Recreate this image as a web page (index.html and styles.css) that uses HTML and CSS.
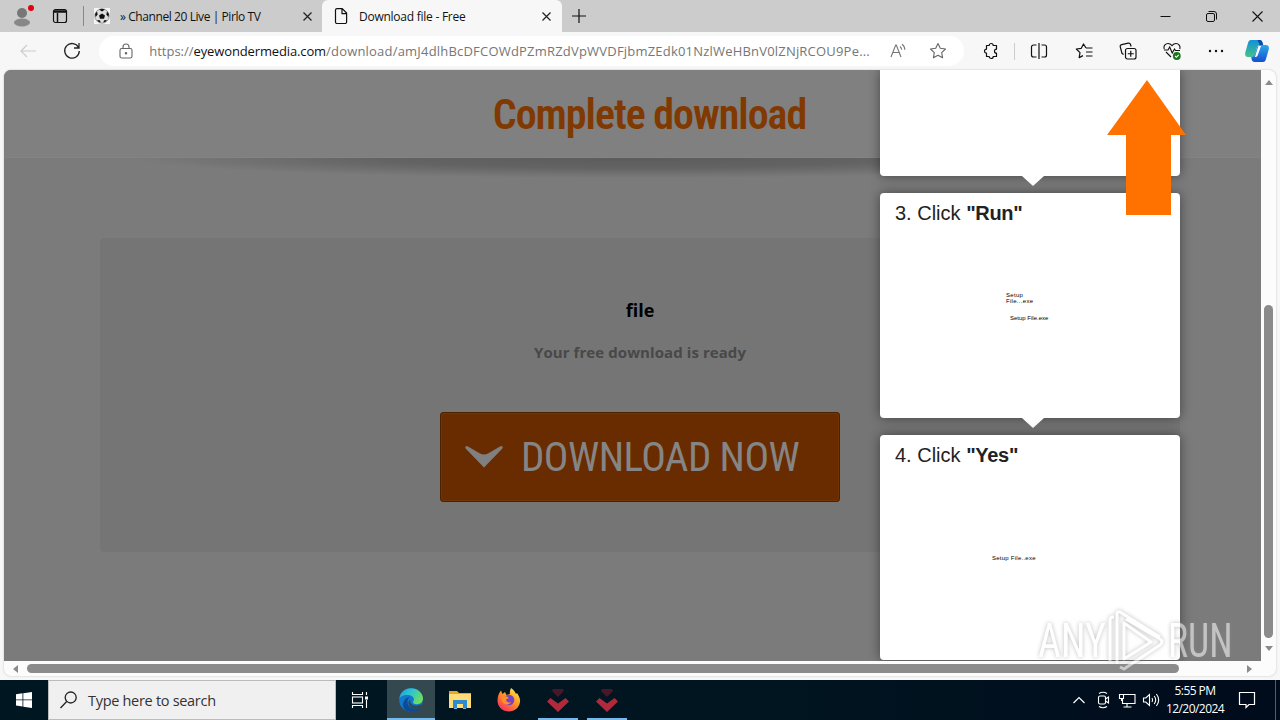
FILE: index.html
```html
<!DOCTYPE html>
<html lang="en">
<head>
    <meta charset="utf-8">
    <title>Download file - Free</title>
    <link rel="stylesheet" href="styles.css">
</head>
<body>
    <div class="tabstrip">
        <div class="profile">
            <svg width="20" height="24" viewBox="0 0 20 24"><circle cx="10" cy="9" r="5" fill="#777"/><ellipse cx="10" cy="18.5" rx="8" ry="4" fill="#888"/><circle cx="19" cy="4" r="3" fill="#e3000f"/></svg>
        </div>
        <div class="workspaces">
            <svg width="16" height="16" viewBox="0 0 16 16" fill="none" stroke="#111" stroke-width="1.200"><rect x="1.500" y="1.500" width="13" height="13" rx="2"/><path d="M2 3h12M2 4h12M5.500 5v9" stroke-width="1.500"/></svg>
        </div>
        <div class="tab-separator"></div>
        <div class="tab">
            <svg class="favicon" width="16" height="16" viewBox="0 0 16 16"><rect width="16" height="16" fill="#f4f4f4"/><circle cx="8" cy="8" r="7.200" fill="#ddd" stroke="#777" stroke-width=".7"/><path d="M8 5.500l3 2-1 3.200H6L5 7.500zM5 1.500l3-.8 3 .9-3 2zM1 6l2-2.500.7 3L1.600 9zM15 6l-2-2.500-.7 3L14.400 9zM3 12l2.800.2 1 2.400-2-.6zM13 12l-2.800.2-1 2.400 2-.6z" fill="#111"/></svg>
            <span class="tab-title first">» Channel 20 Live | Pirlo TV</span>
            <svg class="close" width="9" height="9" viewBox="0 0 9 9"><path d="M.5.5l8 8M8.500.5l-8 8" stroke="#222" stroke-width="1.200"/></svg>
        </div>
        <div class="tab active">
            <svg class="favicon" width="16" height="16" viewBox="0 0 16 16" fill="none" stroke="#111" stroke-width="1.200"><path d="M3.500.6h4.700L12.600 5v9a1.500 1.500 0 0 1-1.500 1.500H3A1.500 1.500 0 0 1 1.500 14V2A1.500 1.500 0 0 1 3 .6zM8 1v4.600h4.400"/></svg>
            <span class="tab-title second">Download file - Free</span>
            <svg class="close" width="9" height="9" viewBox="0 0 9 9"><path d="M.5.5l8 8M8.500.5l-8 8" stroke="#222" stroke-width="1.200"/></svg>
        </div>
        <div class="newtab">
            <svg width="14" height="14" viewBox="0 0 14 14"><path d="M7 0v14M0 7h14" stroke="#111" stroke-width="1.200"/></svg>
        </div>
        <div class="window-buttons">
            <div><svg width="11" height="11" viewBox="0 0 11 11"><path d="M.5 5.500h10" stroke="#111"/></svg></div>
            <div><svg width="11" height="11" viewBox="0 0 11 11" fill="none" stroke="#111"><rect x=".5" y="2.500" width="8" height="8" rx="1.500"/><path d="M2.500.5H8a2.500 2.500 0 0 1 2.500 2.500v5.500"/></svg></div>
            <div><svg width="11" height="11" viewBox="0 0 11 11"><path d="M.5.5l10 10M10.500.5l-10 10" stroke="#111" stroke-width="1.100"/></svg></div>
        </div>
    </div>

    <div class="toolbar">
        <div class="tool back"><svg width="16" height="14" viewBox="0 0 16 14" fill="none" stroke="#ccc" stroke-width="1.200"><path d="M16 7H1M7 1L1 7l6 6"/></svg></div>
        <div class="tool"><svg width="18" height="18" viewBox="0 0 18 18" fill="none" stroke="#222" stroke-width="1.300"><path d="M15.500 5.500A7.300 7.300 0 1 0 16.300 9M16 1v5h-5"/></svg></div>
        <div class="address">
            <svg class="lock" width="14" height="16" viewBox="0 0 14 16" fill="none" stroke="#666" stroke-width="1.100"><rect x="1" y="5.500" width="12" height="9.500" rx="1.800"/><path d="M4 5.500V4a3 3 0 0 1 6 0v1.500"/><circle cx="7" cy="10.200" r=".7" fill="#666"/></svg>
            <span class="url">https://<b>eyewondermedia.com</b><span class="path">/download/amJ4dlhBcDFCOWdPZmRZdVpWVDFjbmZEdk01NzlWeHBnV0lZNjRCOU9Pe...</span></span>
            <svg class="read" width="18" height="16" viewBox="0 0 18 16" fill="none" stroke="#777" stroke-width="1.100"><path d="M1 14L5.700 2h.6L11 14M2.800 9.500h6.400M10 3.500c1 .8 1.600 1.800 1.600 3.200M12 1.300c1.800 1.300 2.800 3.200 2.800 5.500"/></svg>
            <svg class="star" width="18" height="18" viewBox="0 0 18 18" fill="none" stroke="#666" stroke-width="1.100"><path d="M9 1.500l2.300 4.800 5.200.7-3.800 3.600.9 5.200L9 13.300l-4.600 2.500.9-5.200L1.500 7l5.200-.7z" stroke-linejoin="round"/></svg>
        </div>
        <div class="tool puzzle"><svg width="18" height="18" viewBox="0 0 18 18" fill="none" stroke="#111" stroke-width="1.200"><path d="M4.500 3.500h2.700a2 2 0 0 1 4 0h3.300v3.700a2 2 0 0 0 0 4v3.300h-3.300a2 2 0 0 1-4 0H4.500v-3.300a2 2 0 0 1 0-4z" stroke-linejoin="round"/></svg></div>
        <div class="tool-separator"></div>
        <div class="tool"><svg width="18" height="18" viewBox="0 0 18 18" fill="none" stroke="#111" stroke-width="1.200"><path d="M6.500 3H3.500a2 2 0 0 0-2 2v8a2 2 0 0 0 2 2h3M11.500 3h3a2 2 0 0 1 2 2v8a2 2 0 0 1-2 2h-3M9 1v16"/></svg></div>
        <div class="tool"><svg width="18" height="18" viewBox="0 0 18 18" fill="none" stroke="#111" stroke-width="1.200"><path d="M11 6L8.500 2 6.300 6.300l-5 .7L5 10.600l-.8 5 3.800-2M11 6h6.500M11 10h6.500M11 14h6.500" stroke-linejoin="round"/></svg></div>
        <div class="tool"><svg width="18" height="18" viewBox="0 0 18 18" fill="none" stroke="#111" stroke-width="1.200"><rect x="6.500" y="6.500" width="10.500" height="10.500" rx="2"/><path d="M11.750 8.700v6M8.750 11.750h6M4.500 12.500L3 11.300 1.300 5a2 2 0 0 1 1.400-2.400l6.500-1.500a2 2 0 0 1 2.300 1.400l.6 2"/></svg></div>
        <div class="tool"><svg width="18" height="18" viewBox="0 0 18 18" fill="none" stroke="#111" stroke-width="1.100"><path d="M1.300 7C0 3.500 3 1.500 5 1.500c2 0 3 1 4 2.200 1-1.200 2-2.200 4-2.200 2.500 0 4.800 2.300 3.700 5.500M3 10l5 5M1 8h4l1.700-3 2.500 6L11.500 7l1 1.500H17"/><circle cx="13.800" cy="14" r="3.900" fill="#18751c" stroke="none"/><path d="M12 14l1.400 1.300 2.300-2.500" stroke="#fff"/></svg></div>
        <div class="tool"><svg width="16" height="4" viewBox="0 0 16 4" fill="#111"><circle cx="2" cy="2" r="1.200"/><circle cx="8" cy="2" r="1.200"/><circle cx="14" cy="2" r="1.200"/></svg></div>
        <div class="tool copilot">
            <svg width="24" height="24" viewBox="0 0 24 24">
                <defs>
                    <linearGradient id="cpa" x1="0" y1="0" x2="0" y2="1"><stop offset="0" stop-color="#138fd8"/><stop offset="1" stop-color="#42c489"/></linearGradient>
                    <linearGradient id="cpb" x1="0" y1="0" x2="0" y2="1"><stop offset="0" stop-color="#2aa9ec"/><stop offset="1" stop-color="#154fd0"/></linearGradient>
                </defs>
                <path d="M6 1h8.500c1.500 0 2.300 1 2.800 2.500l.8 2.500H15c-1.600 0-2.400.7-3 2.500l-2 6.500c-.6 2-1.500 3-3.500 3H3C.5 18-.3 16 .3 13.500L3 4c.5-2 1.400-3 3-3z" fill="url(#cpa)"/>
                <path d="M18 23H9.500C8 23 7 22 6.700 20.500L6.200 18c2-.2 3.200-1 3.800-3l2-6.500c.6-1.800 1.400-2.500 3-2.500h6c2.500 0 3.300 2 2.700 4.500L21 20c-.5 2-1.400 3-3 3z" fill="url(#cpb)"/>
                <path d="M15 1c1.500 0 2 1 2.500 2.500l.7 2.500h-3.500L12.500 1z" fill="#0d49ad"/>
                <path d="M13.500 7H16l-3 8.500c-.7 1.900-1.200 2.500-3.500 2.500.7-.7 1-1.500 1.300-3z" fill="#fff"/>
            </svg>
        </div>
    </div>

    <div class="browser-page">
        <div class="viewport">
            <header class="page-header"><h1>Complete download</h1></header>
            <div class="header-shadow"></div>
            <main class="download-box">
                <h2>file</h2>
                <p class="ready">Your free download is ready</p>
                <div class="download-button">
                    <svg width="38" height="22" viewBox="0 0 38 22"><path d="M.3 1.500C0 .3 1 0 3 .5L15 7.500q4 2 8 0L35 .5c2-.6 3-.2 2.700 1-.2 1-1 1.700-2 2.700L19 21.500 2.300 4.200C1.300 3.200.5 2.500.3 1.500z" fill="#808080"/></svg>
                    <span>DOWNLOAD NOW</span>
                </div>
            </main>

            <div class="steps">
                <section class="step previous"></section>
                <section class="step">
                    <h3>3. Click <b>"Run"</b></h3>
                    <div class="file-name wrapped">Setup<br>File...exe</div>
                    <div class="file-name source">Setup File.exe</div>
                </section>
                <section class="step last">
                    <h3>4. Click <b>"Yes"</b></h3>
                    <div class="file-name confirm">Setup File..exe</div>
                </section>
            </div>
            <svg class="arrow" width="80" height="136" viewBox="0 0 80 136"><path d="M40 0L79 55H64v80H19V55H0z" fill="#ff7200"/></svg>
        </div>
        <div class="scroll-y">
            <i class="up"></i>
            <div class="thumb-y"></div>
            <i class="down"></i>
        </div>
        <div class="scroll-x">
            <i class="left"></i>
            <div class="thumb-x"></div>
            <i class="right"></i>
        </div>
    </div>

    <div class="watermark">
        <span class="any">ANY</span>
        <svg width="60" height="64" viewBox="0 0 60 64" fill="none" stroke="#fff" stroke-width="3"><path d="M4 52V11q0-3 3-3h1M11 55V5q0-3 3-2l40 25M18 14v36l27-17zM14 58l4 2 36-24q4-3 0-6L20 10" stroke-linejoin="round"/></svg>
        <span class="run">RUN</span>
    </div>

    <div class="taskbar">
        <div class="start"><svg width="16" height="16" viewBox="0 0 16 16" fill="#fff"><path d="M0 2.200l6.500-.9v6.200H0zM7.300 1.200L16 0v7.500H7.300zM0 8.300h6.500v6.200L0 13.600zM7.300 8.300H16V16l-8.700-1.300z"/></svg></div>
        <div class="search">
            <svg width="18" height="18" viewBox="0 0 18 18" fill="none" stroke="#222" stroke-width="1.300"><circle cx="10.700" cy="6.500" r="5.500"/><path d="M6.700 10.500L.5 17"/></svg>
            <span>Type here to search</span>
        </div>
        <div class="app taskview"><svg width="18" height="16" viewBox="0 0 18 16" fill="none" stroke="#fff" stroke-width="1.100"><path d="M1.500 0v2.500h10V0M1.500 16v-2.500h10V16M15.500 0v3M15.500 8v8"/><rect x="1.500" y="5" width="10" height="6"/><path d="M14 4.500h3v3h-3z" fill="#fff" stroke="none"/></svg></div>
        <div class="app current">
            <svg width="24" height="24" viewBox="0 0 24 24">
                <defs><linearGradient id="edge" x1="0" y1="0" x2="1" y2=".5"><stop offset="0" stop-color="#2299d4"/><stop offset=".5" stop-color="#2fc4d1"/><stop offset="1" stop-color="#6bdd61"/></linearGradient></defs>
                <circle cx="12" cy="12" r="11.800" fill="#1377ce"/>
                <path d="M.3 11C1 4.500 5.500.2 12 .2c7 0 12 5 12 10.300 0 3.500-2.500 5.700-6 5.700-2.500 0-4-.8-4-2 0-1 1-1.300 1-3C15 8.500 11.500 7 8 7 4 7 1 9 .3 11z" fill="url(#edge)"/>
                <path d="M8.500 13c-.5 5 4 8.500 9 7.500 2-.4 3.500-1 4.500-1.600-2 3.200-5.500 5-10 5C5 23.500 3 18 4.500 14c1-3 4-5 6.500-5-1.500.8-2.300 2-2.500 4z" fill="#0c4c96"/>
                <path d="M11.500 11.500c-1.500 4.500 3.500 7.500 9 5.500 1.500-.5 2.500-.7 2.300 0-.3.800-1 2-2 2.800-5 3-11-.2-11.300-4.800 0-1.500.8-2.700 2-3.500z" fill="#34484d"/>
            </svg>
        </div>
        <div class="app"><svg width="22" height="20" viewBox="0 0 22 20"><path d="M0 1h8l2 2h12v15H0z" fill="#e8a52b"/><path d="M0 4h22v14H0z" fill="#ffdc76"/><path d="M4 10h14v8h-4v-4H8v4H4z" fill="#2d8ccf"/><path d="M5 18.500h3M14 18.500h3" stroke="#79bae8"/></svg></div>
        <div class="app">
            <svg width="24" height="24" viewBox="0 0 24 24">
                <defs><linearGradient id="fox" x1=".9" y1="0" x2=".2" y2="1"><stop offset="0" stop-color="#fff44f"/><stop offset=".45" stop-color="#ff9924"/><stop offset="1" stop-color="#f52a61"/></linearGradient></defs>
                <path d="M14 0c3 2 4 4 5 6l1-1c2 3 3.500 6 3 9-1 6-5.500 9.500-11 9.500C5.500 23.500.5 19 .5 12.500.5 8 2 5 4 2.500L5.500 6 8 4l1.500 3L13 6c-.5-2 0-4 1-6z" fill="url(#fox)"/>
                <circle cx="12" cy="12" r="5.300" fill="#7542c9"/><path d="M4 9c3-2 6-1 8 1l-3 1.500c0 2.500 3 3.500 5 2.500-2 4-8 3-9-1z" fill="#ff8f24"/>
            </svg>
        </div>
        <div class="app running"><svg width="24" height="24" viewBox="0 0 24 24"><path d="M7 1h10l1 2-6 6-6-6z" fill="#4a1728"/><path d="M4.500 10l7.500 5.500 7.500-5.500 3.500 3.500L12 24 1 13.500z" fill="#b02a3c"/></svg></div>
        <div class="app running"><svg width="24" height="24" viewBox="0 0 24 24"><path d="M7 1h10l1 2-6 6-6-6z" fill="#4a1728"/><path d="M4.500 10l7.500 5.500 7.500-5.500 3.500 3.500L12 24 1 13.500z" fill="#b02a3c"/></svg></div>
        <div class="tray">
            <svg width="24" height="18" viewBox="0 0 24 18" fill="none" stroke="#fff" stroke-width="1.200"><path d="M6.500 12l5.500-5.500 5.500 5.500"/></svg>
            <svg width="24" height="18" viewBox="0 0 24 18" fill="none" stroke="#fff" stroke-width="1.100"><rect x="7.500" y="5" width="7" height="8" rx="1.500"/><path d="M14.500 8l3-2v6l-3-2M8 2.500q4-2.500 8 0M8 15.500q4 2.500 8 0"/></svg>
            <svg width="24" height="18" viewBox="0 0 24 18" fill="none" stroke="#fff" stroke-width="1.100"><path d="M9 3.500h11v9H7.500V8M12 13v3M8.500 16h8M4.500 3.500h4v4h-4zM6.500 7.500V10"/></svg>
            <svg width="24" height="18" viewBox="0 0 24 18" fill="none" stroke="#fff" stroke-width="1.100"><path d="M4.500 7h2.300l3.700-3.500v11L6.800 11H4.500zM13 7q1.300 2 0 4M15.200 5q3 4 0 8M17.400 3q4.600 6 0 12"/></svg>
            <div class="clock"><span>5:55 PM</span><span>12/20/2024</span></div>
            <svg class="notice" width="18" height="18" viewBox="0 0 18 18" fill="none" stroke="#fff" stroke-width="1.200"><path d="M1.500 1.500h15v12h-5.500l-3 3v-3H1.500z"/></svg>
        </div>
    </div>
</body>
</html>
```
FILE: styles.css
```css
* {
    box-sizing: border-box;
}
body {
    margin: 0;
    width: 1280px;
    height: 720px;
    overflow: hidden;
    position: relative;
    font-family: "Open Sans", sans-serif;
    background: #f7f7f7;
}
svg {
    display: block;
    flex: none;
}

/* tabs */
.tabstrip {
    display: flex;
    height: 32px;
    background: #ccc;
}
.profile {
    width: 44px;
    padding: 4px 0 0 12px;
}
.profile svg {
    overflow: visible;
}
.workspaces {
    width: 39px;
    padding: 8px 0 0 8px;
}
.tab-separator {
    width: 1px;
    height: 20px;
    margin-top: 6px;
    background: #888;
}
.tab {
    display: flex;
    align-items: center;
    width: 238px;
    padding: 0 10px;
    font-size: 12px;
    color: #111;
}
.tab.active {
    width: 240px;
    padding: 0 11px 0 12px;
    background: #f7f7f7;
    border-radius: 6px 6px 0 0;
}
.tab-title {
    flex: 1;
    white-space: nowrap;
    margin-left: 10px;
}
.tab-title.first {
    letter-spacing: -0.42px;
}
.tab-title.second {
    margin-left: 9px;
    letter-spacing: -0.25px;
}
.newtab {
    padding: 9px 0 0 10px;
}
.window-buttons {
    display: flex;
    margin-left: auto;
}
.window-buttons div {
    display: flex;
    justify-content: center;
    align-items: center;
    width: 46px;
}

/* toolbar */
.toolbar {
    display: flex;
    align-items: center;
    height: 38px;
    background: #f7f7f7;
}
.tool {
    display: flex;
    justify-content: center;
    align-items: center;
    width: 44.2px;
    height: 38px;
}
.back {
    width: 50px;
    padding-left: 6px;
}
.address {
    display: flex;
    align-items: center;
    width: 865px;
    height: 30px;
    margin-left: 5px;
    padding-left: 20px;
    border-radius: 15px;
    background: #fff;
}
.url {
    width: 722px;
    margin-left: 16px;
    font-size: 13px;
    letter-spacing: 0;
    white-space: nowrap;
    color: #767676;
}
.url b {
    font-weight: normal;
    letter-spacing: -0.13px;
    color: #111;
}
.url .path {
    letter-spacing: 0.2px;
}
.read {
    margin-left: 19px;
}
.star {
    margin-left: 21px;
}
.puzzle {
    margin-left: 5px;
}
.tool-separator {
    width: 1px;
    height: 17px;
    margin: 0 2px 0 1px;
    background: #ccc;
}
.copilot {
    width: 38px;
}

/* web page and its scrollbars */
.browser-page {
    display: grid;
    grid-template-columns: 1257px 15px;
    grid-template-rows: 591px 15px;
    width: 1272px;
    margin-left: 4px;
    background: #fcfcfc;
    border-radius: 7px;
    overflow: hidden;
    box-shadow: 0 0 2px #bbb;
}
.viewport {
    position: relative;
    overflow: hidden;
    background: #7b7b7b;
}
.page-header {
    height: 88px;
    padding-top: 19px;
    padding-left: 34px;
    text-align: center;
    background: #808080;
    border-bottom: 1px solid #838383;
}
.page-header h1 {
    display: inline-block;
    margin: 0;
    font: 600 42px/52px Roboto, sans-serif;
    font-stretch: 75%;
    letter-spacing: -1.02px;
    color: #803900;
    white-space: nowrap;
}
.header-shadow {
    height: 22px;
    background: radial-gradient(ellipse 500px 20px at 50% 0, #5c5c5c, #636363 50%, #7b7b7b);
}
.download-box {
    display: flex;
    flex-direction: column;
    align-items: center;
    width: 1080px;
    height: 314px;
    margin: 58px 0 0 96px;
    background: #757575;
    border-radius: 4px;
}
.download-box h2 {
    margin: 60px 0 0;
    font-size: 18px;
    line-height: 25px;
    color: #000;
}
.ready {
    margin: 18px 0 0;
    font-size: 15px;
    font-weight: bold;
    line-height: 22px;
    letter-spacing: 0.08px;
    color: #484848;
    white-space: nowrap;
}
.download-button {
    display: flex;
    align-items: center;
    width: 400px;
    height: 90px;
    margin-top: 49px;
    padding-left: 24px;
    border: 1px solid #4b2200;
    border-radius: 3px;
    background: #692c00;
    box-shadow: inset 0 0 0 1px #733303;
}
.download-button span {
    margin-left: 18px;
    font: 41px/50px Roboto, sans-serif;
    font-stretch: 75%;
    letter-spacing: -0.55px;
    color: #858585;
    white-space: nowrap;
}

/* install steps */
.steps {
    position: absolute;
    top: 0;
    left: 876px;
    width: 300px;
    color: #222;
    font-family: "Liberation Sans", sans-serif;
}
.step {
    position: relative;
    height: 225px;
    margin-bottom: 17px;
    padding: 8px 15px;
    background: #fff;
    border-radius: 4px;
    box-shadow: 0 0 12px rgba(0, 0, 0, 0.45);
}
.step.previous {
    height: 106px;
    border-radius: 0 0 4px 4px;
}
.step::after {
    content: "";
    position: absolute;
    left: 142px;
    top: 100%;
    border: 11px solid transparent;
    border-top: 10px solid #fff;
    border-bottom: 0;
}
.step.last::after {
    display: none;
}
.step h3 {
    margin: 0;
    font-size: 20px;
    line-height: 24px;
    font-weight: normal;
}
.step h3 b {
    letter-spacing: -0.3px;
}
.file-name {
    width: max-content;
    font-size: 6px;
    line-height: 6px;
    color: #000;
}
.wrapped {
    margin: 67px 0 0 111px;
    letter-spacing: 0.3px;
}
.source {
    margin: 11px 0 0 115px;
}
.confirm {
    margin: 88px 0 0 97px;
    letter-spacing: 0.25px;
}
.arrow {
    position: absolute;
    top: 10px;
    left: 1103px;
}

.scroll-y {
    display: flex;
    flex-direction: column;
    align-items: center;
    padding: 10px 0 10px;
}
.thumb-y {
    width: 9px;
    height: 333px;
    margin: auto 0 8px;
    border-radius: 5px;
    background: #8b8b8b;
}
.scroll-x {
    display: flex;
    align-items: center;
    padding: 0 9px;
}
.thumb-x {
    width: 1152px;
    height: 9px;
    margin: 0 auto 0 9px;
    border-radius: 5px;
    background: #8b8b8b;
}
.scroll-y i,
.scroll-x i {
    border: 4px solid transparent;
}
.scroll-y .up {
    border-top: 0;
    border-bottom: 5px solid #8b8b8b;
}
.scroll-y .down {
    border-bottom: 0;
    border-top: 5px solid #8b8b8b;
}
.scroll-x .left {
    border-left: 0;
    border-right: 5px solid #8b8b8b;
}
.scroll-x .right {
    border-right: 0;
    border-left: 5px solid #8b8b8b;
}

.watermark {
    position: absolute;
    left: 1038px;
    top: 608px;
    display: flex;
    align-items: center;
    height: 66px;
    color: #fff;
    font: 49px/66px Roboto, sans-serif;
    font-stretch: 75%;
    opacity: 0.55;
    filter: drop-shadow(0 0 2px #888);
}
.watermark svg {
    margin: 0 2px 0 6px;
}
.watermark span {
    width: 62px;
    transform-origin: left;
    transform: scaleX(0.81);
}
.watermark .run {
    transform: scaleX(0.77);
}

/* taskbar */
.taskbar {
    position: absolute;
    left: 0;
    right: 0;
    bottom: 0;
    display: flex;
    height: 40px;
    background: linear-gradient(90deg, #001722, #001520 60%, #000b1c);
    color: #fff;
}
.start {
    display: flex;
    justify-content: center;
    align-items: center;
    width: 48px;
}
.search {
    display: flex;
    align-items: center;
    width: 288px;
    padding-left: 11px;
    border: 1px solid #bbb;
    background: #f0f0f0;
    color: #333;
    font-size: 14.5px;
}
.search span {
    margin-left: 10px;
    letter-spacing: -0.3px;
    white-space: nowrap;
}
.app {
    display: flex;
    justify-content: center;
    align-items: center;
    width: 49px;
}
.taskview {
    width: 48px;
    margin-right: 3px;
}
.current {
    width: 48px;
    background: #34484f;
    box-shadow: inset 0 -2px #76b9ed;
}
.running {
    background: linear-gradient(#76b9ed, #76b9ed) center bottom / 40px 2px no-repeat;
}
.tray {
    display: flex;
    align-items: center;
    width: 213px;
    margin-left: auto;
    border-right: 1px solid #555c68;
    margin-right: 4px;
}
.tray > svg:first-child {
    margin-left: 4px;
}
.clock {
    display: flex;
    flex-direction: column;
    align-items: center;
    width: 64px;
    font-size: 12px;
    line-height: 18px;
    letter-spacing: -0.55px;
}
.notice {
    margin-left: 11px;
}
```
